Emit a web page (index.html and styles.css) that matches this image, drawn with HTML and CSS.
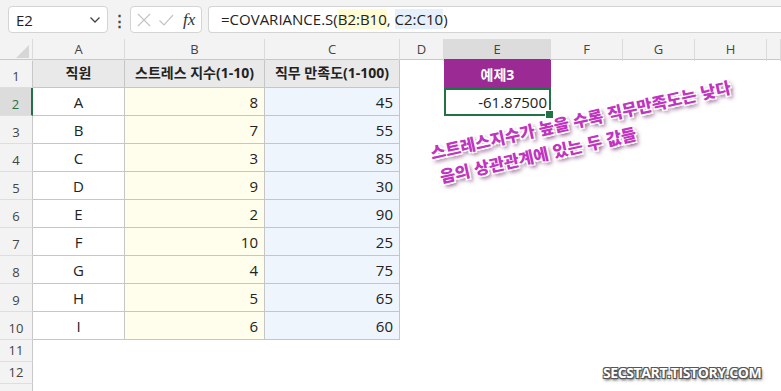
FILE: index.html
```html
<!DOCTYPE html>
<html lang="ko">
<head>
<meta charset="UTF-8" />
<title>COVARIANCE.S</title>
<link rel="stylesheet" href="styles.css">
</head>
<body>

<div class="topbar">
  <div class="namebox">
    <span>E2</span>
    <svg width="12" height="8" viewBox="0 0 12 8"><path d="M1.5 1.5 L6 6 L10.5 1.5" fill="none" stroke="#444" stroke-width="1.3"/></svg>
  </div>
  <div class="dots">&#8942;</div>
  <div class="btnbox">
    <svg width="16" height="16" viewBox="0 0 16 16"><path d="M2 2 L14 14 M14 2 L2 14" stroke="#c4c4c4" stroke-width="1.2"/></svg>
    <svg width="16" height="16" viewBox="0 0 16 16"><path d="M1.5 8.5 L6 13 L15 3" fill="none" stroke="#c4c4c4" stroke-width="1.2"/></svg>
    <span class="fx">fx</span>
  </div>
  <div class="formula">=COVARIANCE.S(<span class="ref-b">B2:B10</span>, <span class="ref-c">C2:C10</span>)</div>
</div>

<div class="sheet">
  <div class="row colheads">
    <div class="corner"></div>
    <div>A</div><div>B</div><div>C</div><div>D</div><div class="sel">E</div><div>F</div><div>G</div><div>H</div><div></div>
  </div>

  <div class="row">
    <div class="rh">1</div>
    <div class="c th">직원</div><div class="c th">스트레스 지수(1-10)</div><div class="c th">직무 만족도(1-100)</div>
    <div></div><div class="ex">예제3</div>
  </div>
  <div class="row">
    <div class="rh rsel">2</div>
    <div class="c mid">A</div><div class="c yb">8</div><div class="c bb">45</div>
    <div></div><div class="active">-61.87500<i class="handle"></i></div>
  </div>
  <div class="row"><div class="rh">3</div><div class="c mid">B</div><div class="c yb">7</div><div class="c bb">55</div></div>
  <div class="row"><div class="rh">4</div><div class="c mid">C</div><div class="c yb">3</div><div class="c bb">85</div></div>
  <div class="row"><div class="rh">5</div><div class="c mid">D</div><div class="c yb">9</div><div class="c bb">30</div></div>
  <div class="row"><div class="rh">6</div><div class="c mid">E</div><div class="c yb">2</div><div class="c bb">90</div></div>
  <div class="row"><div class="rh">7</div><div class="c mid">F</div><div class="c yb">10</div><div class="c bb">25</div></div>
  <div class="row"><div class="rh">8</div><div class="c mid">G</div><div class="c yb">4</div><div class="c bb">75</div></div>
  <div class="row"><div class="rh">9</div><div class="c mid">H</div><div class="c yb">5</div><div class="c bb">65</div></div>
  <div class="row"><div class="rh">10</div><div class="c mid">I</div><div class="c yb">6</div><div class="c bb">60</div></div>
  <div class="row short"><div class="rh">11</div></div>
  <div class="row short"><div class="rh">12</div></div>
  <div class="row short"><div class="rh"></div></div>

  <div class="note">
    <p>스트레스지수가 높을 수록 직무만족도는 낮다</p>
    <p>음의 상관관계에 있는 두 값들</p>
  </div>
  <div class="watermark">SECSTART.TISTORY.COM</div>
</div>

</body>
</html>
```

FILE: styles.css
```css
body { margin: 0; font-family: "Open Sans", "Noto Sans CJK KR", sans-serif; color: #222; background: #fff; width: 781px; height: 391px; overflow: hidden; }

.topbar { height: 39px; background: #f3f3f3; display: flex; align-items: center; padding-left: 8px; box-sizing: border-box; }
.namebox { width: 100px; height: 27px; box-sizing: border-box; background: #fff; border: 1px solid #d4d4d4; border-radius: 4px; display: flex; align-items: center; justify-content: space-between; padding: 0 6px 0 7px; font-size: 15px; }
.dots { width: 22px; text-align: center; font-size: 15px; color: #444; font-weight: bold; }
.btnbox { width: 72px; height: 27px; box-sizing: border-box; background: #fff; border: 1px solid #d4d4d4; border-radius: 4px; display: flex; align-items: center; gap: 6px; padding-left: 5px; }
.fx { font-family: "Liberation Serif", serif; font-style: italic; font-size: 17px; color: #333; margin-left: 3px; }
.formula { flex: 1; margin-left: 6px; height: 27px; box-sizing: border-box; background: #fff; border: 1px solid #d4d4d4; border-right: none; border-radius: 4px 0 0 4px; padding-left: 12px; font-size: 15px; line-height: 25px; white-space: nowrap; }
.ref-b { background: #fffbd2; }
.ref-c { background: #e6f0fb; }

.sheet { position: relative; }
.row { display: grid; grid-template-columns: 33px 92px 140px 135px 44px 107px 72px 72px 72px 1fr; height: 28px; }
.row.short { height: 22px; }
.row > div { box-sizing: border-box; }

.colheads { height: 21px; background: #f3f3f3; border-bottom: 1px solid #c8c8c8; box-sizing: border-box; }
.colheads > div { border-right: 1px solid #dadada; text-align: center; font-size: 13px; line-height: 20px; color: #444; }
.colheads .sel { background: #dcdcdc; border-bottom: 2px solid #217346; }
.corner { position: relative; }
.corner::after { content: ""; position: absolute; right: 3px; bottom: 3px; border-style: solid; border-width: 0 0 13px 13px; border-color: transparent transparent #d6d6d6 transparent; }

.rh { background: #f3f3f3; border-right: 1px solid #c8c8c8; border-bottom: 1px solid #dedede; font-size: 13px; color: #444; display: flex; align-items: flex-end; justify-content: center; padding-bottom: 2px; }
.rsel { background: #dcdcdc; color: #217346; border-right: 2px solid #217346; }

.c { border-right: 1px solid #c6c6c6; border-bottom: 1px solid #c6c6c6; font-size: 15px; display: flex; align-items: flex-end; justify-content: flex-end; padding: 0 6px 3px; }
.c.th { background: #e9e9e9; font-weight: bold; font-size: 14px; justify-content: center; padding-bottom: 5px; }
.c.mid { justify-content: center; }
.yb { background: #fffeec; }
.bb { background: #eef5fd; }

.ex { background: #9c2a94; color: #fff; font-weight: bold; font-size: 14px; display: flex; align-items: center; justify-content: center; }
.active { position: relative; border: 2px solid #217346; font-size: 15px; display: flex; align-items: center; justify-content: flex-end; padding-right: 2px; }
.handle { position: absolute; right: -5px; bottom: -5px; width: 7px; height: 7px; background: #217346; border: 1px solid #fff; }

.note { position: absolute; left: 428px; top: 102px; transform: rotate(-12.5deg); transform-origin: left top; font-family: "Noto Sans CJK KR", sans-serif; font-weight: 900; font-size: 16.5px; color: #c034c0; white-space: nowrap; }
.note p { margin: 0; line-height: 25px; text-shadow: -1.5px -1.5px 0 #fff, 1.5px -1.5px 0 #fff, -1.5px 1.5px 0 #fff, 1.5px 1.5px 0 #fff, 0 0 2px #fff, 2px 3px 4px #6a306a; }
.note p:last-child { margin-left: 4px; }

.watermark { position: absolute; left: 603px; top: 324px; font-family: "Open Sans", sans-serif; font-weight: bold; font-size: 14px; letter-spacing: -0.4px; color: #fff; text-shadow: -1px -1px 0 #555, 1px -1px 0 #555, -1px 1px 0 #555, 1px 1px 0 #555, 1px 2px 3px #333; }
```
